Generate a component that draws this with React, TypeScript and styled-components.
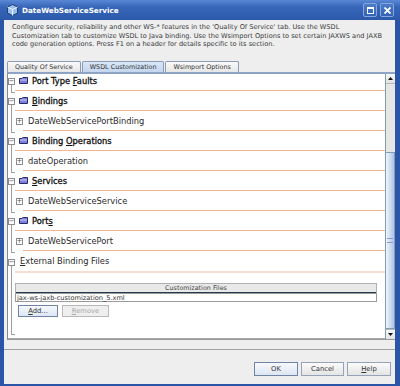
import styled, { createGlobalStyle } from "styled-components";

const Global = createGlobalStyle`
  body {
    margin: 0;
    font-family: "DejaVu Sans", "Liberation Sans", sans-serif;
    color: #222;
  }
`;

const Frame = styled.div`
  width: 400px;
  height: 386px;
  display: flex;
  flex-direction: column;
  background: #2b55a6;
  overflow: hidden;
`;

const TitleBar = styled.div`
  height: 20px;
  flex: none;
  display: flex;
  align-items: center;
  padding: 0 6px 0 7px;
  background: linear-gradient(to bottom, #5a88d6 0%, #3766b8 35%, #2c59aa 100%);
  color: #fff;
`;

const Title = styled.span`
  margin-left: 4px;
  font-size: 7.2px;
  font-weight: bold;
  flex: 1;
`;

const WinButton = styled.div`
  width: 12px;
  height: 12px;
  margin-left: 3px;
  border: 1px solid #86a6dc;
  border-radius: 2px;
  background: linear-gradient(#4d7cc8, #3262b4);
  display: flex;
  align-items: center;
  justify-content: center;
`;

const Body = styled.div`
  flex: 1;
  display: flex;
  flex-direction: column;
  background: #eeeeee;
  margin: 0 5px 2px 4px;
`;

const Description = styled.div`
  height: 40px;
  flex: none;
  box-sizing: border-box;
  padding: 3px 0 0 8px;
  font-size: 6.6px;
  line-height: 8.5px;
  color: #3a3a3a;
  white-space: nowrap;
`;

const TabStrip = styled.div`
  height: 12px;
  flex: none;
  display: flex;
  align-items: flex-end;
  padding-left: 3px;
`;

const Tab = styled.div<{ $active?: boolean }>`
  height: 11px;
  box-sizing: border-box;
  padding: 0 7px;
  margin-right: 1px;
  border: 1px solid #8c9cb4;
  border-bottom: none;
  border-radius: 2px 2px 0 0;
  font-size: 6.4px;
  line-height: 10px;
  color: #333;
  background: ${(p) =>
    p.$active
      ? "linear-gradient(#d9e6f6, #c4d6ef)"
      : "linear-gradient(#fafafa, #e6e6e6)"};
`;

const Panel = styled.div`
  height: 268px;
  flex: none;
  margin-left: 3px;
  box-sizing: border-box;
  border-top: 2px solid #8fa4c4;
  border-left: 1px solid #8a8a8a;
  border-bottom: 1px solid #9a9a9a;
  display: flex;
`;

const ScrollArea = styled.div`
  flex: 1;
  background: #fff;
  overflow: hidden;
  border-bottom: 1px solid #a8a8a8;
`;

const Tree = styled.div`
  margin-top: -3px;
`;

const Group = styled.div`
  position: relative;
  &::before {
    content: "";
    position: absolute;
    left: 3px;
    top: 14px;
    bottom: -2px;
    width: 3px;
    border-left: 1px solid #a0a0a0;
    border-bottom: 1px solid #a0a0a0;
  }
`;

const Row = styled.div<{ $indent: number; $height?: number }>`
  height: ${(p) => p.$height ?? 20}px;
  display: flex;
  padding-left: ${(p) => p.$indent}px;
`;

const Expander = styled.div`
  align-self: center;
  width: 7px;
  height: 7px;
  box-sizing: border-box;
  border: 1px solid #8c8c8c;
  background: #fff;
  position: relative;
  z-index: 1;
  display: flex;
  align-items: center;
  justify-content: center;
  font-size: 7px;
  line-height: 5px;
  color: #555;
`;

const Label = styled.div<{ $line?: string; $strong?: boolean }>`
  flex: 1;
  display: flex;
  align-items: center;
  box-sizing: border-box;
  border-bottom: ${(p) => p.$line ?? "1px solid #f2b48c"};
  padding-left: 5px;
  font-size: 8.3px;
  color: ${(p) => (p.$strong ? "#111" : "#2a2a2a")};
  -webkit-text-stroke: ${(p) => (p.$strong ? "0.3px #111" : "0")};
  white-space: pre;
`;

const FolderWrap = styled.span`
  display: inline-flex;
  margin: 0 4px 0 -1px;
`;

const Mnemonic = styled.span`
  text-decoration: underline;
`;

const TableBox = styled.div`
  margin: 10px 8px 0 7px;
  border: 1px solid #b0b0b0;
  border-bottom: none;
`;

const TableHead = styled.div`
  height: 8px;
  background: #e9e9e9;
  border-bottom: 1px solid #243a52;
  text-align: center;
  font-size: 6.4px;
  line-height: 8px;
  color: #444;
`;

const TableCell = styled.div`
  height: 9px;
  border: 1px solid #9a9a9a;
  margin: 0 -1px;
  box-sizing: border-box;
  padding-left: 1px;
  font-size: 6.6px;
  line-height: 8px;
  color: #333;
`;

const SmallButtons = styled.div`
  display: flex;
  gap: 4px;
  padding: 3px 0 0 10px;
`;

const Button = styled.div<{ $w: number; $h: number; $disabled?: boolean; $focus?: boolean }>`
  width: ${(p) => p.$w}px;
  height: ${(p) => p.$h}px;
  box-sizing: border-box;
  border: 1px solid ${(p) => (p.$disabled ? "#b8b8b8" : p.$focus ? "#6f84a4" : "#95a3b8")};
  background: ${(p) =>
    p.$disabled ? "#efefef" : p.$focus ? "linear-gradient(#f6f9fd, #dde6f2)" : "linear-gradient(#fbfbfb, #e4e4e4)"};
  display: flex;
  align-items: center;
  justify-content: center;
  font-size: 6.8px;
  color: ${(p) => (p.$disabled ? "#a8a8a8" : "#333")};
`;

const ScrollBar = styled.div`
  width: 10px;
  flex: none;
  display: flex;
  flex-direction: column;
  background: #e6e6e6;
  border-left: 1px solid #7f9db9;
  box-sizing: border-box;
`;

const Arrow = styled.div`
  height: 9px;
  flex: none;
  display: flex;
  align-items: center;
  justify-content: center;
  background: linear-gradient(#f8f8f8, #e2e2e2);
  border-bottom: 1px solid #b8b8b8;
  &:last-child {
    border-bottom: none;
    border-top: 1px solid #b8b8b8;
  }
`;

const Track = styled.div`
  height: 68px;
  flex: none;
`;

const Thumb = styled.div`
  flex: 1;
  border: 1px solid #7f9db9;
  border-left: none;
  background: linear-gradient(to right, #f2f6fc, #c8d8ee 60%, #aec4e4);
  display: flex;
  align-items: center;
  justify-content: center;
`;

const Grip = styled.div`
  width: 6px;
  height: 3px;
  border-top: 1px solid #8898c8;
  border-bottom: 1px solid #8898c8;
`;

const Strip = styled.div`
  height: 10px;
  flex: none;
  border-bottom: 1px solid #a2a2a2;
  box-sizing: border-box;
`;

const ButtonBar = styled.div`
  flex: 1;
  display: flex;
  justify-content: flex-end;
  align-items: flex-start;
  gap: 3px;
  padding: 12px 4px 0 0;
`;

const Folder = () => (
  <svg width="9" height="7" viewBox="0 0 9 7">
    <path d="M0.5 1.5 L3 1.5 L3.8 0.5 L8.5 0.5 L8.5 6.5 L0.5 6.5 Z" fill="#7b7fd8" stroke="#2a2a6a" strokeWidth="1" />
    <path d="M1 3 L8 3" stroke="#c8ccf6" strokeWidth="1" />
  </svg>
);

const Header = ({ children }: { children: React.ReactNode }) => (
  <Row $indent={0}>
    <Expander>−</Expander>
    <Label $strong>
      <FolderWrap>
        <Folder />
      </FolderWrap>
      <span>{children}</span>
    </Label>
  </Row>
);

const Child = ({ children }: { children: React.ReactNode }) => (
  <Row $indent={8}>
    <Expander>+</Expander>
    <Label>{children}</Label>
  </Row>
);

export default function App() {
  return (
    <Frame>
      <Global />
      <TitleBar>
        <svg width="11" height="12" viewBox="0 0 11 12">
          <path d="M5.5 0.5 L10.5 3 L10.5 9 L5.5 11.5 L0.5 9 L0.5 3 Z" fill="#9cc0ec" stroke="#1d3f7a" />
          <path d="M0.5 3 L5.5 5.5 L10.5 3 M5.5 5.5 L5.5 11.5" fill="none" stroke="#e9f2fd" />
        </svg>
        <Title>DateWebServiceService</Title>
        <WinButton>
          <svg width="7" height="7" viewBox="0 0 7 7">
            <rect x="0.5" y="0.5" width="6" height="6" fill="none" stroke="#fff" />
            <path d="M0.5 1.5 L6.5 1.5" stroke="#fff" />
          </svg>
        </WinButton>
        <WinButton>
          <svg width="7" height="7" viewBox="0 0 7 7">
            <path d="M0.5 0.5 L6.5 6.5 M6.5 0.5 L0.5 6.5" stroke="#fff" strokeWidth="1.8" />
          </svg>
        </WinButton>
      </TitleBar>
      <Body>
        <Description>
          Configure security, reliability and other WS-* features in the 'Quality Of Service' tab. Use the WSDL
          <br />
          Customization tab to customize WSDL to Java binding. Use the Wsimport Options to set certain JAXWS and JAXB
          <br />
          code generation options. Press F1 on a header for details specific to its section.
        </Description>
        <TabStrip>
          <Tab>Quality Of Service</Tab>
          <Tab $active>WSDL Customization</Tab>
          <Tab>Wsimport Options</Tab>
        </TabStrip>
        <Panel>
          <ScrollArea>
            <Tree>
              <Group>
                <Header>
                  Port Type <Mnemonic>F</Mnemonic>aults
                </Header>
              </Group>
              <Group>
                <Header>
                  <Mnemonic>B</Mnemonic>indings
                </Header>
                <Child>DateWebServicePortBinding</Child>
              </Group>
              <Group>
                <Header>
                  Binding <Mnemonic>O</Mnemonic>perations
                </Header>
                <Child>dateOperation</Child>
              </Group>
              <Group>
                <Header>
                  <Mnemonic>S</Mnemonic>ervices
                </Header>
                <Child>DateWebServiceService</Child>
              </Group>
              <Group>
                <Header>
                  Port<Mnemonic>s</Mnemonic>
                </Header>
                <Child>DateWebServicePort</Child>
              </Group>
              <Group>
                <Row $indent={0} $height={22}>
                  <Expander>−</Expander>
                  <Label $line="2px solid #f8ddd0">
                    <span>
                      <Mnemonic>E</Mnemonic>xternal Binding Files
                    </span>
                  </Label>
                </Row>
                <TableBox>
                  <TableHead>Customization Files</TableHead>
                  <TableCell>jax-ws-jaxb-customization_5.xml</TableCell>
                </TableBox>
                <SmallButtons>
                  <Button $w={40} $h={12} $focus>
                    <span>
                      <Mnemonic>A</Mnemonic>dd...
                    </span>
                  </Button>
                  <Button $w={47} $h={12} $disabled>
                    <span>
                      <Mnemonic>R</Mnemonic>emove
                    </span>
                  </Button>
                </SmallButtons>
                <div style={{ height: 16 }} />
              </Group>
            </Tree>
          </ScrollArea>
          <ScrollBar>
            <Arrow>
              <svg width="5" height="3" viewBox="0 0 5 3">
                <path d="M0 3 L2.5 0 L5 3 Z" fill="#111" />
              </svg>
            </Arrow>
            <Track />
            <Thumb>
              <Grip />
            </Thumb>
            <Arrow>
              <svg width="5" height="3" viewBox="0 0 5 3">
                <path d="M0 0 L2.5 3 L5 0 Z" fill="#111" />
              </svg>
            </Arrow>
          </ScrollBar>
        </Panel>
        <Strip />
        <ButtonBar>
          <Button $w={44} $h={14} $focus>
            OK
          </Button>
          <Button $w={43} $h={14}>
            Cancel
          </Button>
          <Button $w={44} $h={14}>
            <span>
              <Mnemonic>H</Mnemonic>elp
            </span>
          </Button>
        </ButtonBar>
      </Body>
    </Frame>
  );
}
